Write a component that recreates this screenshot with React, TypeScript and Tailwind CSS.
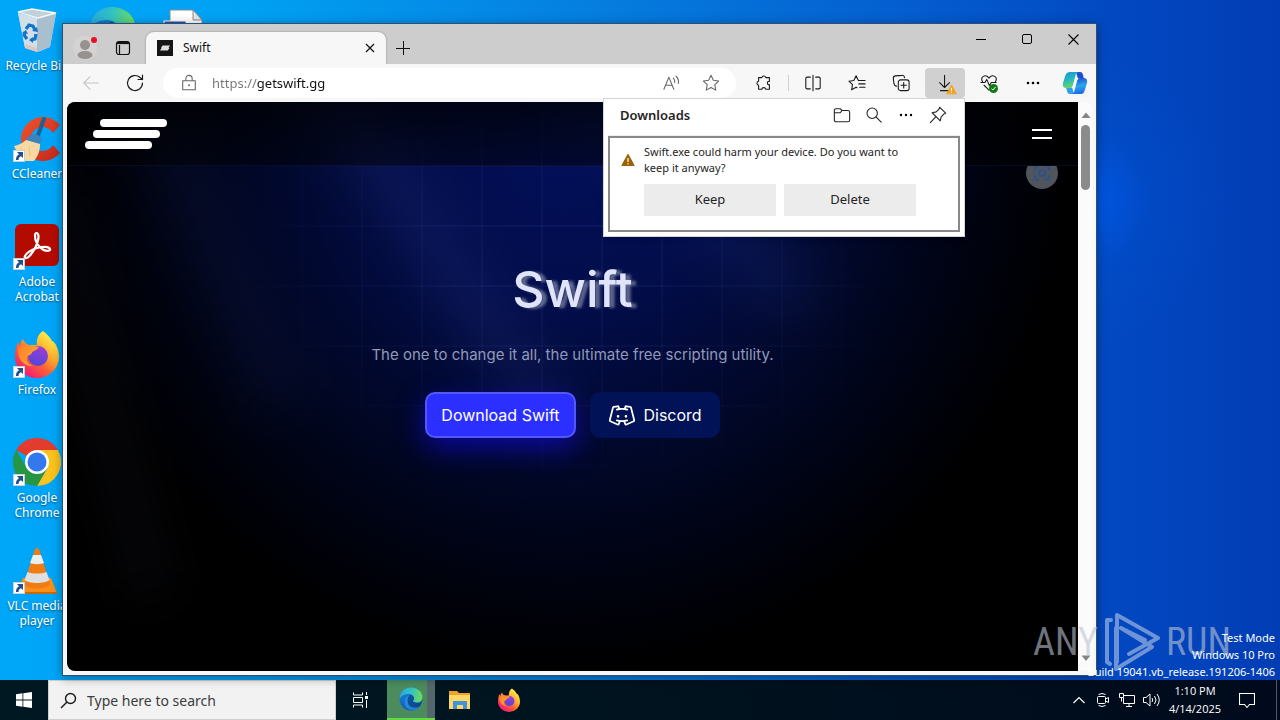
import type { ReactNode } from 'react';
import { PiDiscordLogo } from 'react-icons/pi';

/* ---------- desktop icons ---------- */

function EdgeLogo({ size }: { size: number }) {
  return (
    <svg width={size} height={size} viewBox="0 0 48 48" aria-hidden="true">
      <defs>
        <linearGradient id="edgeTop" x1="0" y1="0.4" x2="1" y2="0.5">
          <stop offset="0" stopColor="#2aa9e0" />
          <stop offset="0.45" stopColor="#2fc2c4" />
          <stop offset="1" stopColor="#6fdc5a" />
        </linearGradient>
        <linearGradient id="edgeBody" x1="0" y1="0" x2="0.4" y2="1">
          <stop offset="0" stopColor="#1a8ad8" />
          <stop offset="1" stopColor="#1158b8" />
        </linearGradient>
        <linearGradient id="edgeTail" x1="0" y1="0" x2="1" y2="1">
          <stop offset="0" stopColor="#0f4a94" />
          <stop offset="1" stopColor="#0c3c80" />
        </linearGradient>
      </defs>
      <circle cx="24" cy="24" r="23" fill="url(#edgeBody)" />
      <path d="M1.500 21C3 9 12 1 24 1c13 0 23 9 23 19 0 7-5 11-11 11-5 0-8-1.500-8-3 0-1.500 2-2 2-5.500C30 18 25.500 14 19 14 10 14 3.500 18 1.500 24z" fill="url(#edgeTop)" />
      <path d="M17 26c0-5 3-8.500 6-10.500 4 1 7 4 7 7.500 0 3-2 4-2 5 0 2 3 4 8 4 4 0 7-1 9.500-3C43 40 34 47 25 47c-3 0-8-8-8-21z" fill="url(#edgeTail)" opacity="0.75" />
      <path d="M17 27c0 9 7 14 14 14 4 0 8-1 11-3-4 6-10 9-17 9-8-2-14-9-14-17 0-6 4-11 9-13-2 3-3 6-3 10z" fill="#2a9be4" opacity="0.7" />
    </svg>
  );
}

function RecycleBin() {
  return (
    <svg width="48" height="48" viewBox="0 0 48 48" aria-hidden="true">
      <path d="M5 7l7 35 13 4 12-5 6-33-20 4z" fill="#d3dfe8" opacity="0.85" />
      <path d="M5 7l19 5v34l-12-4z" fill="#d6e0e8" opacity="0.9" />
      <path d="M24 12l19-5-6 34-13 5z" fill="#a8bccb" opacity="0.9" />
      <path d="M5 6l14-3 24 4-18 5z" fill="#c2d0da" stroke="#f4f8fa" strokeWidth="1.300" />
      <path d="M13 38l11 4v4l-12-4z" fill="#e4b9a8" opacity="0.6" />
      <g fill="none" stroke="#1273c9" strokeWidth="3.200">
        <path d="M13 23l3-4 4 1 2 4" />
        <path d="M23 28l-1 5-4 1" />
        <path d="M14 33l-3-4 1-3" />
      </g>
      <path d="M19 25l6 1-1-5zM20 31l-4 3 4 3zM9 27l4-3 2 4z" fill="#1273c9" />
    </svg>
  );
}

function CCleaner() {
  return (
    <svg width="48" height="48" viewBox="0 0 48 48" aria-hidden="true">
      <defs>
        <linearGradient id="ccRed" x1="0" y1="0" x2="1" y2="1">
          <stop offset="0" stopColor="#f0532d" />
          <stop offset="1" stopColor="#c3261c" />
        </linearGradient>
      </defs>
      <path d="M47 11A22 22 0 1 0 47 39l-7-8a12 12 0 1 1 0-12z" fill="url(#ccRed)" />
      <path d="M31 5l-7 19" stroke="#1f5f95" strokeWidth="4" strokeLinecap="round" />
      <path d="M14 24c5-6 12-4 15 1l-3 6-14-3z" fill="#3a83bd" />
      <path d="M1 32c5-1 9-3 12-6l14 4c0 7-2 12-6 17H8z" fill="#f8d9a4" />
      <path d="M8 34l4 8M16 33l1 9" stroke="#e6c084" fill="none" />
    </svg>
  );
}

function Acrobat() {
  return (
    <svg width="48" height="48" viewBox="0 0 48 48" aria-hidden="true">
      <rect x="2" y="2" width="44" height="42" rx="6" fill="#b30b00" />
      <path
        d="M12 34c2-4 6-6 12-8 6-1.500 12-1.500 13 1 1 2-4 3-8 0-5-4-7-9-7-13 0-4 3-4 3.500 0 .5 6-5 16-9 20-2 2.500-6 3-4.500 0z"
        fill="none" stroke="#fff" strokeWidth="2.200" strokeLinejoin="round"
      />
    </svg>
  );
}

function FirefoxLogo({ size }: { size: number }) {
  return (
    <svg width={size} height={size} viewBox="0 0 48 48" aria-hidden="true">
      <defs>
        <linearGradient id="ffBody" x1="0.85" y1="0.1" x2="0.2" y2="0.95">
          <stop offset="0" stopColor="#fff04a" />
          <stop offset="0.35" stopColor="#ffb02e" />
          <stop offset="0.62" stopColor="#ff5f35" />
          <stop offset="1" stopColor="#f0157c" />
        </linearGradient>
        <linearGradient id="ffGlobe" x1="0.6" y1="0" x2="0.3" y2="1">
          <stop offset="0" stopColor="#a13bd8" />
          <stop offset="1" stopColor="#4d48d6" />
        </linearGradient>
        <linearGradient id="ffFace" x1="0" y1="0" x2="1" y2="0.6">
          <stop offset="0" stopColor="#ff7a2c" />
          <stop offset="1" stopColor="#ffae2a" />
        </linearGradient>
      </defs>
      <path d="M30 1c4 3 7 6 9 10 2 1 3 2 4 4 2 4 3 8 3 12a22 21 0 0 1-44 0c0-6 1-11 3-15 1 2 1 3 2 4 0-3 1-5 3-7 1 3 3 5 6 6h8c-1-5 1-11 6-14z" fill="url(#ffBody)" />
      <circle cx="25" cy="26" r="10" fill="url(#ffGlobe)" />
      <path d="M5 18c3-3 7-4 10-3 3 2 7 1 11 2-2 3-5 4-7 5 0 3-4 3-5 5-1 3 1 8 6 9-9 1-16-7-15-18z" fill="url(#ffFace)" />
    </svg>
  );
}

function Chrome() {
  return (
    <svg width="48" height="48" viewBox="0 0 48 48" aria-hidden="true">
      <path d="M24 24L3.200 12A24 24 0 0 1 44.800 12z" fill="#e33b2e" />
      <path d="M24 12h20.800A24 24 0 0 1 24 48l10.400-18z" fill="#fcc31e" />
      <path d="M13.600 30L3.200 12A24 24 0 0 0 24 48l10.400-18z" fill="#269544" />
      <circle cx="24" cy="24" r="12" fill="#fff" />
      <circle cx="24" cy="24" r="9.500" fill="#3478ee" />
    </svg>
  );
}

function Vlc() {
  return (
    <svg width="48" height="48" viewBox="0 0 48 48" aria-hidden="true">
      <path d="M10 32h28l6 15H3z" fill="#f98f17" />
      <path d="M3 46h41v2H3z" fill="#c86a08" />
      <path d="M22 3q2-2 4 0l11 35c-2 6-24 6-26 0z" fill="#f07c12" />
      <path d="M20 9h8l3 8c-3 1.500-11 1.500-14 0z" fill="#eceff0" />
      <path d="M14.500 26c5 2 14 2 19 0l3 8c-4 4-21 4-25 0z" fill="#dedfe0" />
    </svg>
  );
}

function DocumentFile() {
  return (
    <svg width="48" height="48" viewBox="0 0 48 48" aria-hidden="true">
      <path d="M8 4h23l9 10v32H8z" fill="#fff" stroke="#8b8b8b" />
      <path d="M31 4v10h9z" fill="#e6e6e6" stroke="#8b8b8b" />
      <rect x="2" y="15" width="22" height="20" fill="#2b53a8" stroke="#fff" />
    </svg>
  );
}

function ShortcutArrow() {
  return (
    <svg className="absolute bottom-0 left-0" width="12" height="12" viewBox="0 0 12 12" aria-hidden="true">
      <rect x="0.500" y="0.500" width="11" height="11" fill="#fff" stroke="#c8d0d8" />
      <path d="M4 2h6v6L8 6.200C6 7 5.500 8.500 5.500 10H3C2.800 7 4 5.200 6 4.200z" fill="#24508f" />
    </svg>
  );
}

function DesktopIcon({ label, shortcut, children }: { label: string; shortcut?: boolean; children: ReactNode }) {
  return (
    <button type="button" className="flex h-[108px] w-[74px] flex-col items-center gap-1 pt-1">
      <span className="relative">
        {children}
        {shortcut && <ShortcutArrow />}
      </span>
      <span className="px-1 text-center text-[12px] leading-[15px] text-white [text-shadow:0_1px_2px_#00000080]">{label}</span>
    </button>
  );
}

/* ---------- line icons ---------- */

function Line({ size = 20, className = '', children }: { size?: number; className?: string; children: ReactNode }) {
  return (
    <svg
      width={size} height={size} viewBox="0 0 20 20" fill="none" stroke="currentColor" strokeWidth="1.200"
      strokeLinecap="round" strokeLinejoin="round" className={className} aria-hidden="true"
    >
      {children}
    </svg>
  );
}

const STAR = 'M10 1.500l2.600 5.500 5.900.8-4.300 4.100 1.100 6L10 15l-5.300 2.900 1.100-6L1.500 7.800 7.400 7z';

function ToolButton({ label, active, children }: { label: string; active?: boolean; children: ReactNode }) {
  return (
    <button
      type="button" aria-label={label}
      className={`relative flex h-[30px] w-10 items-center justify-center rounded-sm ${active ? 'bg-[#d0d0d0]' : ''}`}
    >
      {children}
    </button>
  );
}

function Warning({ size, fill }: { size: number; fill: string }) {
  return (
    <svg width={size} height={size} viewBox="0 0 14 14" aria-hidden="true">
      <path d="M7 1.200L13.200 12.500H.8z" fill={fill} stroke={fill} strokeLinejoin="round" />
      <path d="M7 5v4M7 10.200v1.300" stroke="#fff" strokeWidth="1.200" />
    </svg>
  );
}

function Copilot() {
  return (
    <svg width="26" height="26" viewBox="0 0 26 26" aria-hidden="true">
      <defs>
        <linearGradient id="cpA" x1="0" y1="0" x2="0.3" y2="1">
          <stop offset="0" stopColor="#1f8fe0" />
          <stop offset="0.5" stopColor="#22b8c0" />
          <stop offset="1" stopColor="#6ad66a" />
        </linearGradient>
        <linearGradient id="cpB" x1="0.4" y1="0" x2="0.6" y2="1">
          <stop offset="0" stopColor="#1c4fd0" />
          <stop offset="0.5" stopColor="#2aa6f0" />
          <stop offset="1" stopColor="#1a67e0" />
        </linearGradient>
      </defs>
      <path d="M14 2h4c2 0 2.500 1 3 3l1 4h-6z" fill="#1c4fd0" />
      <path d="M12 24H8c-2 0-2.500-1-3-3l-1-4h6z" fill="#2f9ff0" />
      <path d="M8 2h9c-2 0-3 1.500-3.500 3.500L11 15c-.6 2-1.500 3-3.500 3H4c-3 0-3.500-3-3-5l2.500-8C4.500 3 6 2 8 2z" fill="url(#cpA)" />
      <path d="M18 24H9c2 0 3-1.500 3.500-3.500L15 11c.6-2 1.500-3 3.500-3H22c3 0 3.500 3 3 5l-2.500 8c-1 3-2.500 3-4.500 3z" fill="url(#cpB)" />
      <path d="M13.200 8h4.800c-2 0-2.700 1-3.200 3l-2 7H8c2 0 2.700-1 3.200-3z" fill="#f4fbff" />
    </svg>
  );
}

/* ---------- browser ---------- */

function TabStrip() {
  return (
    <div className="flex h-10 items-end bg-[#cdcdcd]">
      <div className="flex h-8 items-center gap-[14px] pl-[10px]">
        <button type="button" aria-label="Profile" className="relative flex size-6 items-center justify-center rounded-full bg-[#d5d3d1]">
          <svg width="24" height="24" viewBox="0 0 24 24" fill="#969290" aria-hidden="true">
            <circle cx="12" cy="9" r="5" />
            <ellipse cx="12" cy="19" rx="7.500" ry="4" />
          </svg>
          <span className="absolute top-[1px] right-0 size-[6px] rounded-full bg-[#e81123]" />
        </button>
        <button type="button" aria-label="Workspaces" className="flex size-6 items-center justify-center">
          <svg width="16" height="16" viewBox="0 0 16 16" fill="none" stroke="#111" strokeWidth="1.200" aria-hidden="true">
            <rect x="1.500" y="1.500" width="13" height="13" rx="2.500" />
            <path d="M2 3h12" strokeWidth="2.200" />
            <path d="M4.500 5v9.500" />
          </svg>
        </button>
      </div>
      <div className="ml-[11px] flex h-8 w-[240px] items-center rounded-t-lg bg-[#f7f7f7] pr-[8px] pl-[11px] shadow-[0_0_2px_#00000060] [clip-path:inset(-3px_-3px_0_-3px)]">
        <svg width="16" height="16" viewBox="0 0 16 16" aria-hidden="true">
          <rect width="16" height="16" fill="#151515" />
          <path d="M5.500 5.500h7.500l-1.500 2.500h1l-1.800 2.500H3l1.500-2.500h-.500z" fill="#ddd" />
        </svg>
        <span className="ml-[10px] flex-1 text-[12px] leading-4 text-[#111]">Swift</span>
        <button type="button" aria-label="Close tab" className="flex size-4 items-center justify-center">
          <svg width="10" height="10" viewBox="0 0 10 10" stroke="#111" strokeWidth="1.200" aria-hidden="true"><path d="M1 1l8 8M9 1l-8 8" /></svg>
        </button>
      </div>
      <button type="button" aria-label="New tab" className="flex h-8 w-[34px] items-center justify-center">
        <svg width="14" height="14" viewBox="0 0 14 14" stroke="#111" aria-hidden="true"><path d="M7.500 0v14M0 7.500h14" /></svg>
      </button>
      <div className="ml-auto flex h-10 items-start">
        <button type="button" aria-label="Minimize" className="flex h-[30px] w-[46px] items-center justify-center">
          <svg width="10" height="10" viewBox="0 0 10 10" stroke="#000" aria-hidden="true"><path d="M0 5.500h10" /></svg>
        </button>
        <button type="button" aria-label="Maximize" className="flex h-[30px] w-[46px] items-center justify-center">
          <svg width="10" height="10" viewBox="0 0 10 10" fill="none" stroke="#000" aria-hidden="true"><rect x="0.500" y="0.500" width="9" height="9" rx="1.500" /></svg>
        </button>
        <button type="button" aria-label="Close" className="flex h-[30px] w-[46px] items-center justify-center">
          <svg width="11" height="11" viewBox="0 0 11 11" stroke="#000" strokeWidth="1.100" aria-hidden="true"><path d="M.5.5l10 10M10.500.5l-10 10" /></svg>
        </button>
      </div>
    </div>
  );
}

function Toolbar() {
  return (
    <div className="flex h-[38px] items-center gap-1 bg-[#f7f7f7] pr-[3px] pl-2 text-[#1b1b1b]">
      <button type="button" aria-label="Back" disabled className="flex h-[30px] w-10 items-center justify-center text-[#c6c6c6]">
        <Line size={18}><path d="M18 10H2M9 3l-7 7 7 7" /></Line>
      </button>
      <ToolButton label="Refresh">
        <Line><path d="M17.500 10a7.500 7.500 0 1 1-2.400-5.500l2.400 2M17.500 2v4.500H13" /></Line>
      </ToolButton>
      <div className="mr-1 ml-1 flex h-[30px] flex-1 items-center rounded-full bg-white pr-[16px] pl-[17px]">
        <Line size={18} className="text-[#666]"><path d="M3 7.500h14v10H3zM6.500 7.500V5a3.500 3.500 0 0 1 7 0v2.500" /><circle cx="10" cy="12.500" r="0.500" /></Line>
        <input
          aria-label="Address" defaultValue="https://getswift.gg"
          className="ml-[14px] min-w-0 flex-1 bg-[linear-gradient(90deg,#757575_45px,#111_45px)] bg-clip-text text-[13px] leading-5 text-transparent outline-none"
        />
        <button type="button" aria-label="Read aloud" className="mr-[21px] text-[#666]">
          <Line size={18}><path d="M1 17L6.500 3.500 12 17M3 12.500h7M11.500 4.500q2 2 1.500 5M14.500 2.500q3.500 3.500 2.500 8" /></Line>
        </button>
        <button type="button" aria-label="Add to favorites" className="text-[#666]">
          <Line size={18}><path d={STAR} /></Line>
        </button>
      </div>
      <ToolButton label="Extensions">
        <Line size={18}><path d="M4 4h3.500a2.300 2.300 0 0 1 4.500 0H16v4.200c-3-.6-3 4.200 0 3.600V17h-4a2.300 2.300 0 0 0-4.500 0H4v-4.500a2.300 2.300 0 0 1 0-4.500z" /></Line>
      </ToolButton>
      <span className="h-[16px] w-px bg-[#cfcfcf]" />
      <ToolButton label="Split screen">
        <Line size={18}><path d="M7 3.500H3.500Q2 3.500 2 5v10q0 1.500 1.500 1.500H7M13 3.500h3.500Q18 3.500 18 5v10q0 1.500-1.500 1.500H13M10 1.500v17" /></Line>
      </ToolButton>
      <ToolButton label="Favorites">
        <Line size={18}><path d="M11.500 7.300L9 2 6.500 7.300l-5.500.7 4 3.900-1 5.600 5-2.700 1 .5M11.500 7.300H19M12 11h7M13 14.800h6" /></Line>
      </ToolButton>
      <ToolButton label="Collections">
        <Line size={18}><path d="M5 13.500c-2 0-2.500-1-2.900-3L1.500 5c-.3-2 .5-2.600 2-2.900L11 1.500c2-.3 2.700.5 3 2.500" /><rect x="7" y="6.500" width="12" height="12" rx="2.500" /><path d="M13 9.500v6M10 12.500h6" /></Line>
      </ToolButton>
      <ToolButton label="Downloads" active>
        <Line size={18}><path d="M9.500 1.500v13M4 9.500l5.500 5.500L15 9.500M5 18.500h9" /></Line>
        <span className="absolute right-[8px] bottom-[3px]"><Warning size={11} fill="#f5a21b" /></span>
      </ToolButton>
      <ToolButton label="Browser essentials">
        <Line size={18}><path d="M3 9C-.5 3 6-.5 10 4.500 14-.5 20.500 3 17 9M1 9.500h4.500l2-3.500 3 7 2-3.500H18M4.500 12.500L10 18" /></Line>
        <svg className="absolute right-[11px] bottom-[5px]" width="9" height="9" viewBox="0 0 9 9" fill="none" aria-hidden="true">
          <circle cx="4.500" cy="4.500" r="4.500" fill="#107c10" /><path d="M2.500 4.700L4 6l2.500-3" stroke="#fff" />
        </svg>
      </ToolButton>
      <ToolButton label="Settings and more">
        <svg width="16" height="4" viewBox="0 0 16 4" aria-hidden="true"><circle cx="3" cy="2" r="1.300" /><circle cx="8" cy="2" r="1.300" /><circle cx="13" cy="2" r="1.300" /></svg>
      </ToolButton>
      <button type="button" aria-label="Copilot" className="flex h-[30px] w-9 items-center justify-center"><Copilot /></button>
    </div>
  );
}

function DownloadsPopup() {
  return (
    <section aria-label="Downloads" className="absolute top-[74px] right-[131px] w-[362px] border border-[#d4d4d4] bg-white p-1 pt-0 text-[#242424] shadow-md">
      <header className="flex h-[37px] items-center border-b border-[#ededed] pr-[13px] pb-[4px] pl-3">
        <h2 className="flex-1 text-[13px] leading-5 font-semibold">Downloads</h2>
        <div className="flex items-center gap-[14px]">
          <button type="button" aria-label="Open downloads folder">
            <Line size={18}><path d="M1.500 6V5Q1.500 3 3.500 3H8l2 2h6.500q2 0 2 2v8.500q0 2-2 2h-13q-2 0-2-2zM1.500 7.500H8l2-2.500" /></Line>
          </button>
          <button type="button" aria-label="Search downloads">
            <Line size={18}><circle cx="8" cy="8" r="5.800" /><path d="M12.200 12.200L18 18" /></Line>
          </button>
          <button type="button" aria-label="More options">
            <svg width="18" height="18" viewBox="0 0 18 18" aria-hidden="true"><circle cx="4" cy="9" r="1.200" /><circle cx="9" cy="9" r="1.200" /><circle cx="14" cy="9" r="1.200" /></svg>
          </button>
          <button type="button" aria-label="Pin">
            <Line size={18}><path d="M12 1.500L18.500 8l-2 1-3 3-1 4.500L3.500 7.500 8 6.500l3-3zM7.500 12L1.500 18.500" /></Line>
          </button>
        </div>
      </header>
      <div className="flex gap-[9px] border-2 border-[#8a8886] pt-[6px] pr-[14px] pb-[14px] pl-[11px]">
        <span className="mt-[9px] w-[14px] shrink-0"><Warning size={14} fill="#9d6104" /></span>
        <div className="flex-1">
          <p className="text-[11px] leading-4">Swift.exe could harm your device. Do you want to<br />keep it anyway?</p>
          <div className="mt-2 mr-[28px] flex gap-2">
            <button type="button" className="h-8 flex-1 bg-[#ececec] text-[13px]">Keep</button>
            <button type="button" className="h-8 flex-1 bg-[#ececec] text-[13px]">Delete</button>
          </div>
        </div>
      </div>
    </section>
  );
}

function Page() {
  return (
    <main className="relative flex min-w-0 flex-1 flex-col overflow-hidden rounded-l-lg bg-[radial-gradient(ellipse_510px_520px_at_49%_50px,#030f58_0%,#020d4a_30%,#010726_62%,#00020d_85%,#000_100%)] bg-black font-[Inter,sans-serif]">
      <div className="absolute -top-20 left-[110px] h-[400px] w-[50px] -rotate-[24deg] bg-[#4050b0]/8 blur-xl" />
      <div className="absolute -top-24 left-[340px] h-[460px] w-[46px] -rotate-[34deg] bg-[#5565d0]/12 blur-xl" />
      <div className="absolute -top-20 left-[590px] h-[330px] w-[60px] -rotate-[45deg] bg-[#3050c0]/12 blur-xl" />
      <div className="absolute top-[80px] left-[20px] h-[420px] w-[30px] -rotate-[14deg] bg-[#6070b0]/8 blur-xl" />
      <div className="absolute inset-x-0 top-[4px] h-[400px] bg-[repeating-linear-gradient(90deg,transparent_0_58px,#7090ff10_58px_60px),repeating-linear-gradient(0deg,transparent_0_58px,#7090ff10_58px_60px)] [background-position:-4px_0,0_19px] [mask-image:radial-gradient(ellipse_380px_250px_at_50%_40%,#000_20%,transparent_100%)]" />

      <header className="relative flex h-16 items-center justify-between border-b border-[#2a3aa0]/20 bg-[linear-gradient(180deg,#000000b8,#00000078)] pr-[26px] pl-[18px]">
        <a href="#home" aria-label="Swift home">
          <svg width="82" height="30" viewBox="0 0 82 30" fill="#fff" aria-hidden="true">
            <rect x="15" width="67" height="8" rx="4" />
            <rect x="8" y="11" width="67" height="8" rx="4" />
            <rect y="22" width="67" height="8" rx="4" />
          </svg>
        </a>
        <button type="button" aria-label="Menu">
          <svg width="20" height="10" viewBox="0 0 20 10" stroke="#fff" strokeWidth="2" aria-hidden="true"><path d="M0 1h20M0 9h20" /></svg>
        </button>
      </header>
      <button type="button" aria-label="Visual search" className="absolute top-16 right-5 h-[23px] w-8 overflow-hidden">
        <svg width="32" height="23" viewBox="0 9 32 23" aria-hidden="true">
          <circle cx="16" cy="16" r="16" fill="#50545c" />
          <g fill="none" stroke="#235296" strokeWidth="1.500">
            <path d="M9 14v-2q0-3 3-3h1M19 9h1q3 0 3 3v2M23 18v2q0 3-3 3h-1M13 23h-1q-3 0-3-3v-2" />
            <circle cx="16" cy="16" r="3" />
          </g>
        </svg>
      </button>

      <section className="relative flex flex-col items-center pt-[93px] text-center">
        <h1 className="text-[50px] leading-[60px] font-medium text-[#dfe4fa] [text-shadow:5px_1px_3px_#ffffff60]">Swift</h1>
        <p className="mt-[24px] text-[15px] leading-6 text-[#9199b8]">The one to change it all, the ultimate free scripting utility.</p>
        <div className="mt-[25px] flex gap-[14px]">
          <a href="#download" className="flex h-[46px] items-center rounded-[10px] border-2 border-[#5458fc] bg-[#2b2fff] px-[14px] text-[16px] text-white shadow-[0_10px_28px_#1208e0a0]">Download Swift</a>
          <a href="#discord" className="flex h-[46px] items-center gap-2 rounded-[10px] bg-[#021256] px-[18px] text-[16px] text-white">
            <PiDiscordLogo size={28} />
            Discord
          </a>
        </div>
      </section>
    </main>
  );
}

function ScrollBar() {
  return (
    <div className="flex w-[15px] flex-col items-center justify-between rounded-r-lg bg-[#fbfbfb] py-[9px]">
      <div className="flex flex-col items-center gap-[4px]">
        <svg width="10" height="10" viewBox="0 0 10 10" fill="#858585" aria-hidden="true"><path d="M5 1.500L9.500 7H.5z" /></svg>
        <span className="h-[65px] w-[9px] rounded-full bg-[#8b8b8b]" />
      </div>
      <svg width="10" height="8" viewBox="0 0 10 8" fill="#858585" aria-hidden="true"><path d="M5 7L.5 1.500h9z" /></svg>
    </div>
  );
}

function BrowserWindow() {
  return (
    <div className="absolute top-[23px] right-[183px] bottom-1 left-[62px] flex flex-col border border-[#2c4f78] bg-[#f7f7f7] shadow-[0_2px_10px_#00000060]">
      <TabStrip />
      <Toolbar />
      <div className="flex min-h-0 flex-1 pr-[3px] pb-1 pl-1">
        <Page />
        <ScrollBar />
      </div>
      <DownloadsPopup />
    </div>
  );
}

/* ---------- taskbar ---------- */

function Taskbar() {
  return (
    <footer className="flex h-10 shrink-0 items-stretch bg-[linear-gradient(90deg,#001821,#00141f_45%,#000a1c)] text-white">
      <button type="button" aria-label="Start" className="flex w-12 items-center justify-center">
        <svg width="16" height="16" viewBox="0 0 16 16" fill="#fff" aria-hidden="true"><path d="M0 2.200l6.500-.9v6.300H0zM7.300 1.200L16 0v7.600H7.300zM0 8.400h6.500v6.300L0 13.800zM7.300 8.400H16V16l-8.700-1.200z" /></svg>
      </button>
      <label className="flex w-[288px] items-center gap-[10px] border border-[#cfcfcf] bg-[#f2f2f2] pl-[11px]">
        <svg width="17" height="17" viewBox="0 0 17 17" className="shrink-0" fill="none" stroke="#1b1b1b" strokeWidth="1.400" aria-hidden="true"><circle cx="10.500" cy="6.500" r="5" /><path d="M7 10L1 16" /></svg>
        <input aria-label="Search" placeholder="Type here to search" className="w-full bg-transparent text-[14px] text-black outline-none placeholder:text-[#3c3c3c]" />
      </label>
      <button type="button" aria-label="Task view" className="flex w-12 items-center justify-center">
        <svg width="17" height="16" viewBox="0 0 17 16" fill="none" stroke="#fff" aria-hidden="true"><path d="M1.500.5V3h9V.500M1.500 15.500V13h9v2.500M1.500 5.500h9v5h-9zM14.500 0v3M14.500 8v8" /><rect x="13.500" y="4.500" width="2" height="2" fill="#fff" /></svg>
      </button>
      <button type="button" aria-label="Microsoft Edge" className="ml-[3px] flex w-12 items-center justify-center border-b-2 border-[#62da43] bg-[linear-gradient(90deg,#4b8b5d_40px,#55666c_40px)]"><EdgeLogo size={24} /></button>
      <button type="button" aria-label="File Explorer" className="flex w-[49px] items-center justify-center">
        <svg width="22" height="20" viewBox="0 0 22 20" aria-hidden="true">
          <path d="M0 1h8l2 2h11v15H0z" fill="#eaa32b" />
          <path d="M0 5h21v14H0z" fill="#ffd766" />
          <path d="M4 11h14v8h-4v-4H8v4H4z" fill="#3f93dc" />
        </svg>
      </button>
      <button type="button" aria-label="Firefox" className="flex w-[49px] items-center justify-center"><FirefoxLogo size={24} /></button>

      <div className="ml-auto flex items-center">
        <button type="button" aria-label="Show hidden icons" className="flex w-6 justify-center">
          <svg width="12" height="8" viewBox="0 0 12 8" fill="none" stroke="#fff" strokeWidth="1.200" aria-hidden="true"><path d="M.5 7L6 1.500 11.500 7" /></svg>
        </button>
        <button type="button" aria-label="Meet now" className="flex w-6 justify-center">
          <svg width="14" height="16" viewBox="0 0 14 16" fill="none" stroke="#fff" aria-hidden="true"><rect x="1.500" y="4.500" width="8" height="7" rx="1" /><path d="M9.500 7l3-1.500v5l-3-1.500M2.500 2.500Q6 .5 9.500 2.500M2.500 13.500q3.500 2 7 0" /></svg>
        </button>
        <button type="button" aria-label="Network" className="flex w-6 justify-center">
          <svg width="16" height="16" viewBox="0 0 16 16" fill="none" stroke="#fff" aria-hidden="true"><path d="M5 3.500h10.500v8H4.500V6M10 11.500v3M7 14.500h6M.5 1.500h4v4h-4zM2.500 5.500v4" /></svg>
        </button>
        <button type="button" aria-label="Volume" className="flex w-6 justify-center">
          <svg width="17" height="16" viewBox="0 0 17 16" fill="none" stroke="#fff" aria-hidden="true"><path d="M.5 5.500H3l4-3.500v12l-4-3.500H.5zM9 6q1.500 2 0 4M11.500 4q3 4 0 8M14 2q4.500 6 0 12" /></svg>
        </button>
        <time className="w-16 text-center font-['Open_Sans','Noto_Sans',sans-serif] text-[11px] leading-[18px] whitespace-nowrap">1:10 PM<br />4/14/2025</time>
        <button type="button" aria-label="Notifications" className="flex w-10 justify-center">
          <svg width="16" height="17" viewBox="0 0 16 17" fill="none" stroke="#fff" strokeWidth="1.100" aria-hidden="true"><path d="M.5 1.500h15v11h-5L8 15.500 5.500 12.500h-5z" /></svg>
        </button>
        <span className="ml-[9px] h-10 w-1 border-l border-[#4c5a68]" />
      </div>
    </footer>
  );
}

function Watermark() {
  return (
    <div className="pointer-events-none absolute right-[49px] bottom-[8px] flex items-center gap-[6px] font-['Roboto_Condensed','Liberation_Sans_Narrow',Roboto,sans-serif] text-[38px] leading-[60px] font-normal text-[#bcc4d2]/60">
      <span>ANY</span>
      <svg width="56" height="60" viewBox="0 0 56 60" fill="none" stroke="#c8d4ea" strokeOpacity="0.55" strokeWidth="4" strokeLinejoin="round" strokeLinecap="round" aria-hidden="true">
        <path d="M7 8H3v42l3 2M13 50V3l41 23-29 16M17 16l31 19-36 22V16M17 16l24 12" />
      </svg>
      <span>RUN</span>
    </div>
  );
}

export default function App() {
  return (
    <div className="flex h-screen flex-col overflow-hidden font-['Noto_Sans','Open_Sans',sans-serif]">
      <div className="relative flex-1 bg-[radial-gradient(circle_at_1080px_200px,#0158e6_0,#0050d055_70px,transparent_150px),linear-gradient(90deg,#00a6f8_0%,#00a2f4_18%,#0580e0_45%,#0458cc_75%,#0247c0_88%,#023db4_100%)]">
        <div className="absolute top-[2px] left-0 grid grid-flow-col grid-rows-6">
          <DesktopIcon label="Recycle Bin"><RecycleBin /></DesktopIcon>
          <DesktopIcon label="CCleaner" shortcut><CCleaner /></DesktopIcon>
          <DesktopIcon label="Adobe Acrobat" shortcut><Acrobat /></DesktopIcon>
          <DesktopIcon label="Firefox" shortcut><FirefoxLogo size={48} /></DesktopIcon>
          <DesktopIcon label="Google Chrome" shortcut><Chrome /></DesktopIcon>
          <DesktopIcon label="VLC media player" shortcut><Vlc /></DesktopIcon>
        </div>
        <div className="absolute top-[2px] left-[75px] flex">
          <DesktopIcon label=""><EdgeLogo size={48} /></DesktopIcon>
          <DesktopIcon label=""><DocumentFile /></DesktopIcon>
        </div>
        <BrowserWindow />
        <Watermark />
        <p className="absolute right-[5px] bottom-0 text-right text-[11px] leading-[17px] text-white">Test Mode<br />Windows 10 Pro<br />Build 19041.vb_release.191206-1406</p>
      </div>
      <Taskbar />
    </div>
  );
}
